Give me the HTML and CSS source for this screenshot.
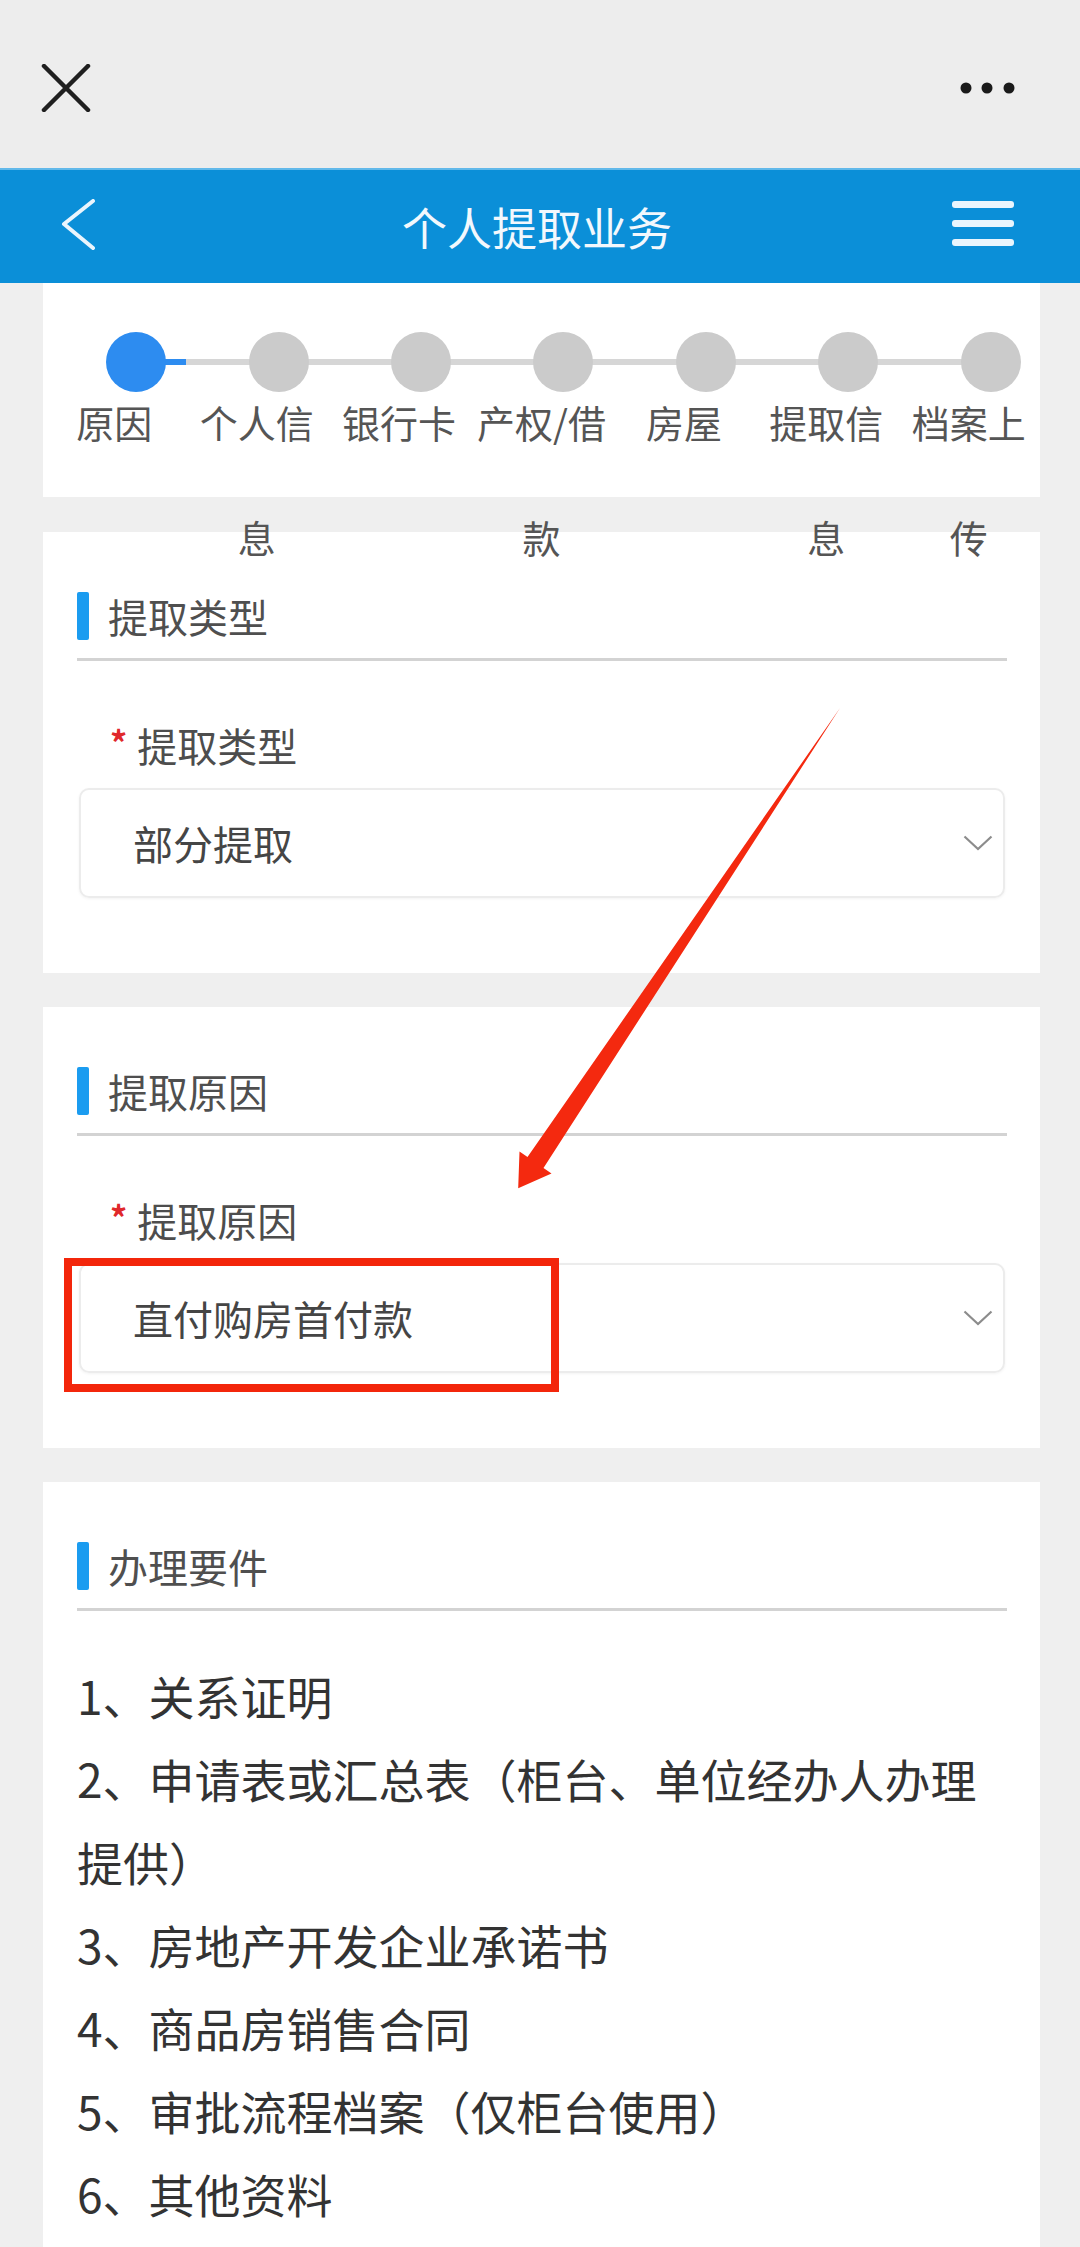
FILE: index.html
```html
<!DOCTYPE html>
<html lang="zh-CN">
<head>
<meta charset="utf-8">
<title>个人提取业务</title>
<link rel="stylesheet" href="styles.css">
</head>
<body>
<div class="page">
  <header class="topbar">
    <svg class="icon-close" viewBox="0 0 50 48" aria-hidden="true">
      <path d="M3 2 L47 46 M47 2 L3 46" stroke="#1f1f1f" stroke-width="4.5" stroke-linecap="round" fill="none"/>
    </svg>
    <svg class="icon-more" viewBox="0 0 60 14" aria-hidden="true">
      <circle cx="8" cy="7" r="5.5" fill="#1a1a1a"/>
      <circle cx="29" cy="7" r="5.5" fill="#1a1a1a"/>
      <circle cx="51" cy="7" r="5.5" fill="#1a1a1a"/>
    </svg>
  </header>

  <nav class="navbar">
    <svg class="icon-back" viewBox="0 0 40 56" aria-hidden="true">
      <polyline points="33,2 4,25 33,49" stroke="#eaf5fd" stroke-width="4" stroke-linecap="round" stroke-linejoin="round" fill="none"/>
    </svg>
    <h1 class="nav-title">个人提取业务</h1>
    <svg class="icon-menu" viewBox="0 0 62 48" aria-hidden="true">
      <rect x="0" y="0" width="62" height="7" rx="3" fill="#eaf5fd"/>
      <rect x="0" y="19" width="62" height="7" rx="3" fill="#eaf5fd"/>
      <rect x="0" y="38" width="62" height="7" rx="3" fill="#eaf5fd"/>
    </svg>
  </nav>

  <main class="content">
    <section class="card card-steps">
      <ol class="stepper">
        <li class="step active"><span class="dot"></span><span class="step-label">原因</span></li>
        <li class="step"><span class="dot"></span><span class="step-label">个人信息</span></li>
        <li class="step"><span class="dot"></span><span class="step-label">银行卡</span></li>
        <li class="step"><span class="dot"></span><span class="step-label">产权/借款</span></li>
        <li class="step"><span class="dot"></span><span class="step-label">房屋</span></li>
        <li class="step"><span class="dot"></span><span class="step-label">提取信息</span></li>
        <li class="step"><span class="dot"></span><span class="step-label">档案上传</span></li>
      </ol>
    </section>

    <section class="card card-form">
      <div class="section-head"><span class="mark"></span><h2 class="section-title">提取类型</h2></div>
      <div class="field-label"><span class="req">*</span>提取类型</div>
      <div class="select">
        <span class="select-value">部分提取</span>
        <svg class="chevron" viewBox="0 0 30 16" aria-hidden="true"><polyline points="1.5,1.5 15,14 28.5,1.5" stroke="#8c8c8c" stroke-width="2.2" fill="none"/></svg>
      </div>
    </section>

    <section class="card card-form">
      <div class="section-head"><span class="mark"></span><h2 class="section-title">提取原因</h2></div>
      <div class="field-label"><span class="req">*</span>提取原因</div>
      <div class="select">
        <span class="select-value">直付购房首付款</span>
        <svg class="chevron" viewBox="0 0 30 16" aria-hidden="true"><polyline points="1.5,1.5 15,14 28.5,1.5" stroke="#8c8c8c" stroke-width="2.2" fill="none"/></svg>
      </div>
    </section>

    <section class="card card-list">
      <div class="section-head"><span class="mark"></span><h2 class="section-title">办理要件</h2></div>
      <ul class="req-list">
        <li>1、关系证明</li>
        <li>2、申请表或汇总表（柜台、单位经办人办理提供）</li>
        <li>3、房地产开发企业承诺书</li>
        <li>4、商品房销售合同</li>
        <li>5、审批流程档案（仅柜台使用）</li>
        <li>6、其他资料</li>
      </ul>
    </section>
  </main>

  <!-- red markup drawn on top of the form -->
  <svg class="markup-arrow" viewBox="0 0 1080 2247" aria-hidden="true">
    <polygon points="840,708 543.5,1167.9 551.5,1173.4 518.2,1188.2 519.5,1151.6 527.5,1157.1" fill="#f4290f"/>
  </svg>
  <div class="markup-box"></div>
</div>
</body>
</html>
```

FILE: styles.css
```css
* {
  box-sizing: border-box;
}

html,
body {
  margin: 0;
  padding: 0;
}

body {
  background: #efefef;
  font-family: "Noto Sans CJK SC", "Noto Sans", sans-serif;
  color: #333;
}

.page {
  position: relative;
  width: 1080px;
  min-height: 2247px;
  overflow: hidden;
}

/* ---------- top system bar ---------- */
.topbar {
  height: 168px;
  background: #ededed;
  display: flex;
  align-items: center;
  justify-content: space-between;
  padding: 8px 62px 0 41px;
}

.icon-close {
  display: block;
  width: 50px;
  height: 48px;
}

.icon-more {
  display: block;
  width: 60px;
  height: 14px;
}

/* ---------- blue title bar ---------- */
.navbar {
  height: 115px;
  background: #0b8fd8;
  border-top: 2px solid #62b9ea;
  display: grid;
  grid-template-columns: 1fr auto 1fr;
  align-items: center;
  padding: 0 66px 0 60px;
}

.icon-back {
  display: block;
  width: 40px;
  height: 56px;
}

.nav-title {
  margin: 0;
  font-size: 45px;
  font-weight: 400;
  color: #f2f8fd;
  line-height: 1;
}

.icon-menu {
  display: block;
  width: 62px;
  height: 48px;
  justify-self: end;
  margin-top: -4px;
}

/* ---------- cards ---------- */
.card {
  background: #fff;
  margin: 0 40px 34px 43px;
  padding: 0 33px 0 34px;
}

/* ---------- stepper ---------- */
.card-steps {
  height: 214px;
  padding: 49px 0 0;
  margin-bottom: 35px;
}

.stepper {
  list-style: none;
  margin: 0;
  padding: 0;
  display: grid;
  grid-template-columns: repeat(7, 1fr);
  position: relative;
}

.stepper::before {
  content: "";
  position: absolute;
  top: 27px;
  left: 93px;
  right: 48px;
  height: 6px;
  background: #d6d6d6;
}

.stepper::after {
  content: "";
  position: absolute;
  top: 27px;
  left: 93px;
  width: 50px;
  height: 6px;
  background: #2d8cf0;
}

.step {
  display: flex;
  flex-direction: column;
  align-items: center;
  min-width: 0;
}

.dot {
  position: relative;
  z-index: 1;
  width: 60px;
  height: 60px;
  margin-left: 44px;
  border-radius: 50%;
  background: #cbcbcb;
}

.step.active .dot {
  background: #2d8cf0;
}

.step-label {
  width: 100%;
  margin-top: -28px;
  font-size: 38px;
  line-height: 115px;
  text-align: center;
  color: #555;
}

/* ---------- section header ---------- */
.section-head {
  display: flex;
  align-items: center;
  box-sizing: content-box;
  height: 56px;
  padding: 56px 0 14px;
  border-bottom: 3px solid #d3d3d3;
}

.mark {
  width: 12px;
  height: 48px;
  border-radius: 2px;
  background: #1b9cf0;
}

.section-title {
  margin: 0 0 0 19px;
  font-size: 40px;
  font-weight: 400;
  line-height: 56px;
  color: #4f4f4f;
}

/* ---------- form field ---------- */
.card-form {
  padding-bottom: 75px;
}

.field-label {
  margin-top: 56px;
  padding-left: 33px;
  height: 56px;
  font-size: 40px;
  line-height: 56px;
  color: #4d4d4d;
}

.req {
  display: inline-block;
  font-size: 34px;
  font-weight: 700;
  line-height: 1;
  color: #e0282b;
  margin-right: 10px;
  vertical-align: 6px;
}

.select {
  margin: 15px 2px 0;
  height: 110px;
  border: 2px solid #ececec;
  border-radius: 10px;
  box-shadow: 0 1px 3px rgba(0, 0, 0, 0.05);
  display: flex;
  align-items: center;
  justify-content: space-between;
  padding: 0 10px 0 52px;
}

.select-value {
  font-size: 40px;
  color: #454545;
}

.chevron {
  display: block;
  width: 30px;
  height: 16px;
}

/* ---------- requirement list ---------- */
.card-list {
  padding-bottom: 60px;
  margin-bottom: 0;
}

.req-list {
  list-style: none;
  margin: 43px 0 0;
  padding: 0;
  font-size: 46px;
  line-height: 83px;
  color: #333;
}

/* ---------- markup overlay ---------- */
.markup-arrow {
  position: absolute;
  top: 0;
  left: 0;
  width: 1080px;
  height: 2247px;
  pointer-events: none;
}

.markup-box {
  position: absolute;
  left: 64px;
  top: 1258px;
  width: 495px;
  height: 134px;
  border: 8px solid #f3260b;
  pointer-events: none;
}
```
